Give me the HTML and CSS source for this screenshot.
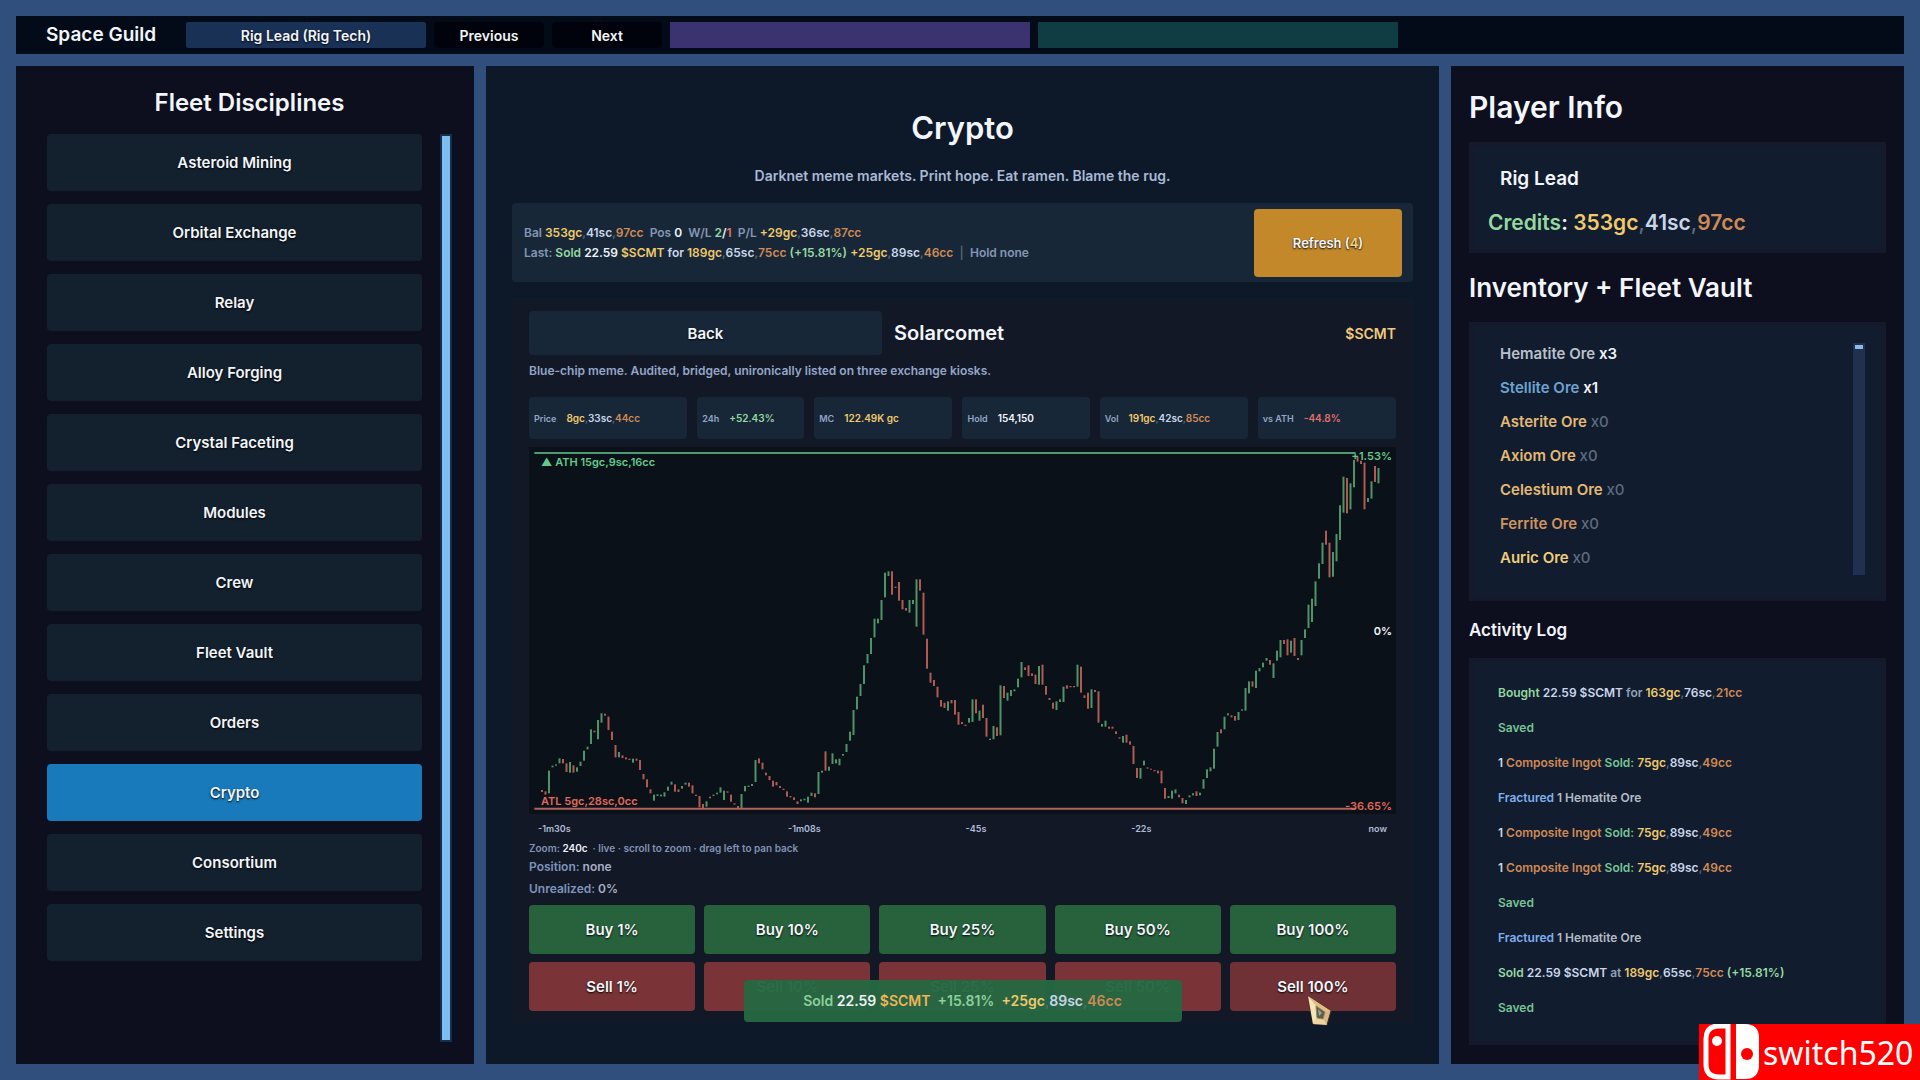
FILE: index.html
```html
<!DOCTYPE html>
<html lang="en">
<head>
    <meta charset="UTF-8">
    <meta name="viewport" content="width=device-width, initial-scale=1.0">
    <title>Space Guild | Crypto</title>
    <link rel="stylesheet" href="styles.css">
</head>
<body>
    <header class="topbar">
        <div class="brand">Space Guild</div>
        <button class="rank" type="button">Rig Lead (Rig Tech)</button>
        <button class="step" type="button">Previous</button>
        <button class="step" type="button">Next</button>
        <div class="meter purple"></div>
        <div class="meter teal"></div>
    </header>

    <main class="columns">
        <nav class="panel disciplines">
            <h2>Fleet Disciplines</h2>
            <div class="nav-scroll">
                <div class="nav-list">
                    <button type="button">Asteroid Mining</button>
                    <button type="button">Orbital Exchange</button>
                    <button type="button">Relay</button>
                    <button type="button">Alloy Forging</button>
                    <button type="button">Crystal Faceting</button>
                    <button type="button">Modules</button>
                    <button type="button">Crew</button>
                    <button type="button">Fleet Vault</button>
                    <button type="button">Orders</button>
                    <button type="button" class="active">Crypto</button>
                    <button type="button">Consortium</button>
                    <button type="button">Settings</button>
                </div>
                <div class="nav-bar"></div>
            </div>
        </nav>

        <section class="panel market">
            <h1>Crypto</h1>
            <p class="tagline">Darknet meme markets. Print hope. Eat ramen. Blame the rug.</p>

            <div class="account">
                <div class="account-text">
                    <p>Bal <span class="gc">353gc</span><i>,</i><span class="sc">41sc</span><i>,</i><span class="cc">97cc</span>&nbsp; Pos <b>0</b>&nbsp; W/L <span class="up">2</span><b>/</b><span class="down">1</span>&nbsp; P/L <span class="gc">+29gc</span><i>,</i><span class="sc">36sc</span><i>,</i><span class="cc">87cc</span></p>
                    <p>Last: <span class="up">Sold</span> <b>22.59</b> <span class="gc">$SCMT</span> <span class="sc">for</span> <span class="gc">189gc</span><i>,</i><span class="sc">65sc</span><i>,</i><span class="cc">75cc</span> <span class="up">(+15.81%)</span> <span class="gc">+25gc</span><i>,</i><span class="sc">89sc</span><i>,</i><span class="cc">46cc</span> <i>&nbsp;|&nbsp;</i> Hold none</p>
                </div>
                <button class="refresh" type="button">Refresh (<span class="count">4</span>)</button>
            </div>

            <div class="coin">
                <div class="coin-head">
                    <button class="back" type="button">Back</button>
                    <h3>Solarcomet</h3>
                    <span class="ticker">$SCMT</span>
                </div>
                <p class="about">Blue-chip meme. Audited, bridged, unironically listed on three exchange kiosks.</p>

                <div class="stats">
                    <div>Price <strong><span class="gc">8gc</span><i>,</i><span class="sc">33sc</span><i>,</i><span class="cc">44cc</span></strong></div>
                    <div>24h <strong class="up">+52.43%</strong></div>
                    <div>MC <strong class="gc">122.49K gc</strong></div>
                    <div>Hold <strong class="white">154,150</strong></div>
                    <div>Vol <strong><span class="gc">191gc</span><i>,</i><span class="sc">42sc</span><i>,</i><span class="cc">85cc</span></strong></div>
                    <div>vs ATH <strong class="down">-44.8%</strong></div>
                </div>

                <div class="chart">
                    <svg id="candles" viewBox="0 0 2601 1101" preserveAspectRatio="none"></svg>
                    <span class="tag ath">▲ ATH 15gc,9sc,16cc</span>
                    <span class="tag high">+1.53%</span>
                    <span class="tag zero">0%</span>
                    <span class="tag atl">ATL 5gc,28sc,0cc</span>
                    <span class="tag low">-36.65%</span>
                </div>
                <div class="axis">
                    <span>-1m30s</span><span>-1m08s</span><span>-45s</span><span>-22s</span><span>now</span>
                </div>

                <p class="zoom">Zoom: <b>240c</b> &nbsp;· live · scroll to zoom · drag left to pan back</p>
                <p class="holding">Position: <span>none</span></p>
                <p class="holding">Unrealized: <span>0%</span></p>

                <div class="trade">
                    <button class="buy" type="button">Buy 1%</button>
                    <button class="buy" type="button">Buy 10%</button>
                    <button class="buy" type="button">Buy 25%</button>
                    <button class="buy" type="button">Buy 50%</button>
                    <button class="buy" type="button">Buy 100%</button>
                    <button class="sell" type="button">Sell 1%</button>
                    <button class="sell" type="button">Sell 10%</button>
                    <button class="sell" type="button">Sell 25%</button>
                    <button class="sell" type="button">Sell 50%</button>
                    <button class="sell" type="button">Sell 100%
                        <svg class="pointer" viewBox="0 0 26 32">
                            <path d="M1 1 L24 16 L20 30 L6 29 Z" fill="#d8b985" stroke="#3a2a1c" stroke-width="1"/>
                            <path d="M1 1 L24 16 L18 17 L9 11 Z" fill="#e0bd84"/>
                            <path d="M1 1 L9 11 L10 23 L6 29 Z" fill="#f6e4b4"/>
                            <path d="M6 29 L10 23 L16 24 L20 30 Z" fill="#ecd5a0"/>
                            <path d="M9 11 L18 17 L16 24 L10 23 Z" fill="#5a5c50" stroke="#9a8558" stroke-width="1"/>
                            <path d="M11 14 L15 18 L12 21 Z" fill="#9aa59c"/>
                        </svg>
                    </button>
                </div>
                <div class="toast">Sold <b>22.59</b> <span class="ora">$SCMT</span>&nbsp; +15.81%&nbsp; <span class="gc">+25gc</span><i>,</i><span class="sc">89sc</span><i>,</i><span class="cc">46cc</span></div>
            </div>
        </section>

        <aside class="panel info">
            <h2>Player Info</h2>
            <div class="card player">
                <p class="name">Rig Lead</p>
                <p class="credits"><span class="up">Credits</span><b>:</b> <span class="gc">353gc</span><i>,</i><span class="sc">41sc</span><i>,</i><span class="cc">97cc</span></p>
            </div>

            <h3>Inventory + Fleet Vault</h3>
            <div class="card inventory">
                <ul>
                    <li class="hematite">Hematite Ore <b>x3</b></li>
                    <li class="stellite">Stellite Ore <b>x1</b></li>
                    <li class="asterite">Asterite Ore <i>x0</i></li>
                    <li class="asterite">Axiom Ore <i>x0</i></li>
                    <li class="asterite">Celestium Ore <i>x0</i></li>
                    <li class="ferrite">Ferrite Ore <i>x0</i></li>
                    <li class="auric">Auric Ore <i>x0</i></li>
                </ul>
                <div class="inv-bar"><div class="thumb"></div></div>
            </div>

            <h4>Activity Log</h4>
            <div class="card log">
                <p><span class="up">Bought</span> <span class="sc">22.59 $SCMT</span> for <span class="gc">163gc</span><i>,</i><span class="sc">76sc</span><i>,</i><span class="cc">21cc</span></p>
                <p><span class="saved">Saved</span></p>
                <p><span class="sc">1</span> <span class="cc">Composite Ingot</span> <span class="saved">Sold:</span> <span class="gc">75gc</span><i>,</i><span class="sc">89sc</span><i>,</i><span class="cc">49cc</span></p>
                <p><span class="blue">Fractured</span> <span class="grey">1 Hematite Ore</span></p>
                <p><span class="sc">1</span> <span class="cc">Composite Ingot</span> <span class="saved">Sold:</span> <span class="gc">75gc</span><i>,</i><span class="sc">89sc</span><i>,</i><span class="cc">49cc</span></p>
                <p><span class="sc">1</span> <span class="cc">Composite Ingot</span> <span class="saved">Sold:</span> <span class="gc">75gc</span><i>,</i><span class="sc">89sc</span><i>,</i><span class="cc">49cc</span></p>
                <p><span class="saved">Saved</span></p>
                <p><span class="blue">Fractured</span> <span class="grey">1 Hematite Ore</span></p>
                <p><span class="up">Sold</span> <span class="sc">22.59 $SCMT</span> at <span class="gc">189gc</span><i>,</i><span class="sc">65sc</span><i>,</i><span class="cc">75cc</span> <span class="up">(+15.81%)</span></p>
                <p><span class="saved">Saved</span></p>
            </div>
        </aside>
    </main>

    <div class="watermark">
        <svg viewBox="0 0 56 56">
            <path d="M16 2 H25 V53 H16 Q3 53 3 40 V15 Q3 2 16 2 Z" fill="none" stroke="#fff" stroke-width="5"/>
            <circle cx="14" cy="17" r="5" fill="#fff"/>
            <path d="M33 0 H42 Q56 0 56 14 V41 Q56 55 42 55 H33 Z" fill="#fff"/>
            <circle cx="44" cy="30" r="6" fill="#f00"/>
        </svg>
        <span>switch520</span>
    </div>
    <script src="script.js"></script>
</body>
</html>
```
FILE: styles.css
```css
* {
    box-sizing: border-box;
}
body {
    margin: 0;
    min-height: 100vh;
    padding: 16px;
    display: flex;
    flex-direction: column;
    gap: 12px;
    background-color: #304f7d;
    color: #f2f5fa;
    font-family: Inter, "Liberation Sans", sans-serif;
    font-weight: 600;
}
h1, h2, h3, h4, p, ul {
    margin: 0;
    padding: 0;
    font-weight: 600;
}
button {
    font: inherit;
    color: #f2f5fa;
    border: none;
    border-radius: 4px;
    padding: 0;
    cursor: pointer;
    text-shadow: 0 1px 2px #000;
}
b {
    font-weight: 600;
    color: #eef2f8;
}
i {
    font-style: normal;
    font-weight: 500;
    color: #5d6b7e;
}

/* coin + status colours */
.gc { color: #f0c96c; }
.sc { color: #c9d6ea; }
.cc { color: #cf8a55; }
.up { color: #95d8a0; }
.down { color: #e0706c; }
.ora { color: #f0b458; }
.white { color: #f2f5fa; }
.saved { color: #76c493; }
.blue { color: #7fb0ee; }
.grey { color: #b4bcc6; }

/* top bar */
.topbar {
    height: 38px;
    padding: 6px 30px;
    display: flex;
    background-color: #020b17;
    font-size: 14px;
}
.brand {
    width: 140px;
    font-size: 19px;
    line-height: 26px;
}
.rank {
    width: 240px;
    margin-right: 8px;
    border-radius: 2px;
    background-color: #1a3156;
}
.step {
    width: 110px;
    margin-right: 8px;
    background-color: #01030c;
}
.meter {
    width: 360px;
    margin-right: 8px;
}
.purple {
    background-color: #3b3370;
}
.teal {
    background-color: #103c43;
}

/* three columns */
.columns {
    flex: 1;
    display: grid;
    grid-template-columns: 458fr 953fr 453fr;
    gap: 12px;
}
.panel {
    background-color: #0d0e1e;
    min-width: 0;
}

/* left nav */
.disciplines {
    display: flex;
    flex-direction: column;
    padding: 21px 22px 22px 31px;
}
.disciplines h2 {
    font-size: 24px;
    line-height: 32px;
    text-align: center;
}
.nav-scroll {
    flex: 1;
    display: flex;
    justify-content: space-between;
    gap: 18px;
    margin-top: 15px;
}
.nav-list {
    flex: 1;
    display: flex;
    flex-direction: column;
    gap: 13px;
}
.nav-list button {
    height: 57px;
    background-color: #13202e;
    font-size: 15px;
}
.nav-list .active {
    background-color: #187abb;
}
.nav-bar {
    width: 12px;
    background-color: #7fbdf0;
    border: 2px solid #14304d;
}

/* market */
.market {
    background-color: #0d1828;
    padding: 40px 26px;
}
.market h1 {
    font-size: 31px;
    line-height: 44px;
    text-align: center;
}
.tagline {
    margin-top: 16px;
    font-size: 14px;
    line-height: 20px;
    text-align: center;
    color: #a9b9d6;
}
.account {
    display: flex;
    justify-content: space-between;
    align-items: center;
    margin-top: 17px;
    height: 79px;
    padding: 0 11px 0 12px;
    background-color: #182738;
    border-radius: 4px;
    font-size: 12px;
    line-height: 20px;
    color: #8397b5;
}
.refresh {
    width: 148px;
    height: 68px;
    background-color: #c3882a;
    font-size: 13px;
}
.count {
    color: #f0d28a;
}
.coin {
    position: relative;
    margin-top: 17px;
    padding: 11px 16px 11px 16px;
    background-color: #131827;
    border: 1px solid #101a2b;
}
.coin-head {
    display: flex;
    align-items: center;
    gap: 12px;
}
.back {
    width: 353px;
    height: 44px;
    background-color: #182738;
    font-size: 15px;
}
.coin-head h3 {
    flex: 1;
    font-size: 20px;
}
.ticker {
    color: #f0c97c;
    font-size: 14px;
}
.about {
    margin-top: 6px;
    font-size: 12px;
    line-height: 20px;
    color: #93a6c8;
}
.stats {
    display: grid;
    grid-template-columns: 158fr 107fr 138fr 127fr 148fr 138fr;
    gap: 10px;
    margin-top: 16px;
    font-size: 9px;
    color: #93a6c8;
}
.stats div {
    display: flex;
    align-items: center;
    gap: 10px;
    height: 42px;
    padding-left: 5px;
    background-color: #182738;
    border-radius: 4px;
}
.stats strong {
    font-weight: 600;
    font-size: 10px;
}

/* chart */
.chart {
    position: relative;
    margin-top: 8px;
    height: 367px;
    background-color: #0a1118;
}
.chart svg {
    display: block;
    width: 100%;
    height: 100%;
}
.tag {
    position: absolute;
    font-size: 11px;
    line-height: 14px;
}
.ath {
    left: 12px;
    top: 8px;
    color: #63c88b;
}
.high {
    right: 4px;
    top: 2px;
    color: #63c88b;
}
.zero {
    right: 4px;
    top: 177px;
}
.atl {
    left: 12px;
    bottom: 6px;
    color: #e0695c;
}
.low {
    right: 4px;
    bottom: 1px;
    color: #e0695c;
}
.axis {
    display: flex;
    padding: 0 9px;
    margin-top: 8px;
    font-size: 9px;
    line-height: 14px;
    color: #b0bcd8;
}
.axis span {
    flex: 1 1 auto;
    text-align: center;
}
.axis span:first-child {
    text-align: left;
}
.axis span:last-child {
    text-align: right;
}
.zoom {
    margin-top: 5px;
    font-size: 10px;
    line-height: 14px;
    color: #7f93b5;
}
.holding {
    margin-top: 2px;
    font-size: 12px;
    line-height: 20px;
    color: #7d94ba;
}
.holding span {
    color: #a5afc2;
}
.trade {
    display: grid;
    grid-template-columns: repeat(5, 1fr);
    gap: 8px 9px;
    margin-top: 6px;
    font-size: 15px;
}
.trade button {
    position: relative;
    height: 49px;
}
.buy {
    background-color: #27623d;
}
.sell {
    background-color: #7a3336;
}
.trade button:last-child {
    background-color: #703136;
}
.pointer {
    position: absolute;
    left: 77px;
    top: 33px;
    width: 26px;
    height: 32px;
    z-index: 2;
}
.toast {
    position: absolute;
    left: 50%;
    bottom: 0;
    width: 438px;
    margin-left: -219px;
    border-radius: 4px;
    background-color: rgba(38, 103, 66, 0.97);
    font-size: 14px;
    line-height: 42px;
    text-align: center;
    color: #8bd09b;
}

/* right column */
.info {
    display: flex;
    flex-direction: column;
    padding: 21px 18px 19px 18px;
}
.info h2 {
    font-size: 30px;
    line-height: 40px;
}
.info h3 {
    margin-top: 17px;
    font-size: 26px;
    line-height: 36px;
}
.info h4 {
    margin-top: 18px;
    font-size: 17px;
    line-height: 22px;
}
.card {
    background-color: #111c2e;
    border: 5px solid #14192b;
}
.player {
    margin-top: 15px;
    height: 111px;
    padding: 18px 14px;
}
.name {
    padding-left: 12px;
    font-size: 19px;
    line-height: 28px;
}
.credits {
    margin-top: 14px;
    font-size: 21px;
    line-height: 32px;
}
.inventory {
    display: flex;
    justify-content: space-between;
    margin-top: 16px;
    height: 279px;
    padding: 10px 16px 20px 26px;
}
.inventory ul {
    list-style: none;
    font-size: 15px;
    line-height: 34px;
}
.hematite { color: #b9c1cc; }
.stellite { color: #6fa3d2; }
.asterite { color: #e3b974; }
.ferrite { color: #cf935f; }
.auric { color: #f0cc7a; }
.inv-bar {
    width: 12px;
    height: 232px;
    margin-top: 6px;
    padding: 2px;
    background-color: #21304f;
}
.thumb {
    height: 4px;
    background-color: #86bdea;
}
.log {
    flex: 1;
    margin-top: 17px;
    padding: 12px 24px;
    font-size: 12px;
    line-height: 35px;
    color: #8fa1b8;
}

.watermark {
    position: fixed;
    right: 0;
    bottom: 0;
    display: flex;
    align-items: center;
    gap: 4px;
    width: 221px;
    height: 56px;
    padding-left: 4px;
    background-color: #ff0000;
    color: #fff;
    font-family: "Noto Sans", sans-serif;
    font-weight: 400;
    font-size: 32px;
}
.watermark svg {
    width: 56px;
    height: 56px;
}
```
FILE: script.js
```js
// one entry per candle: u = up, d = down, then high-low
const data = `
d1080-1086 d1084-1094 u1022-1090 u1007-1012 u1003-1007 u985-1000 d987-1000 d1000-1026 u996-1028 d1006-1028
u1012-1025 u995-1008 u962-992 u950-958 u898-942 d902-907 u870-928 u850-878 d851-857 d860-900
d905-930 d945-982 u966-982 d976-984 d982-988 d986-990 u986-998 d986-992 d990-1020 d1032-1048
d1048-1072 d1078-1090 u1094-1112 u1093-1098 u1094-1099 u1087-1100 u1070-1082 u1055-1064 d1063-1085 d1078-1086
u1068-1076 u1058-1064 d1058-1070 d1066-1090 d1094-1098 d1098-1132 d1122-1134 u1114-1130 d1100-1105 u1094-1098
u1088-1093 u1072-1088 u1082-1110 d1084-1088 d1094-1115 d1120-1124 d1128-1134 u1092-1134 u1068-1084 u1067-1071
u1062-1068 u990-1056 d985-1000 d998-1018 d1028-1036 d1038-1050 d1052-1070 d1056-1066 d1068-1074 d1076-1080
d1084-1100 d1098-1102 d1102-1110 d1114-1122 u1108-1114 u1106-1111 u1100-1118 u1088-1098 d1090-1102 u1026-1092
u1022-1028 d964-1022 u1010-1022 u970-1002 u988-1000 u986-1006 u972-977 u942-966 u905-932 u840-915
u800-838 u762-798 u706-762 u672-700 u624-672 u566-622 u566-580 u510-570 u428-502 u424-438
d424-494 d470-474 d456-512 d510-538 d534-542 u510-548 u510-522 u448-590 d448-482 d488-614
d626-716 d728-758 d750-768 d770-802 d810-830 d818-834 u814-842 d810-820 d810-854 d846-884
d876-882 d884-888 u864-878 u808-876 d808-850 u842-872 d824-864 d864-920 u926-930 u888-928
d892-918 u766-916 d768-804 u788-812 u780-798 u778-784 u746-772 u696-742 d712-720 d706-738
d730-738 d734-762 u708-764 d704-764 d768-794 d804-810 d818-836 u814-840 u808-816 u770-816
d766-776 d768-772 d768-772 u704-770 d710-788 d796-804 d788-836 u778-834 d780-786 d784-878
u882-890 u872-890 d890-896 d890-896 d904-912 d922-926 u918-938 d914-938 d934-944 d948-1002
d1014-1044 u1014-1046 u992-1006 d1012-1016 d1016-1019 d1020-1024 d1022-1030 d1022-1060 d1074-1106 u1098-1104
u1082-1106 u1078-1090 d1094-1102 d1104-1120 u1110-1122 u1096-1102 u1090-1096 d1084-1098 u1088-1096 u1048-1076
u1018-1044 u1012-1024 u956-1016 u906-950 d898-910 u860-898 u850-856 d856-862 d858-872 u846-870
u838-842 u774-842 u754-790 d754-770 u722-774 u714-724 u698-712 u684-692 d690-704 u700-744
u662-692 u630-682 d630-642 d628-676 u632-668 d624-678 d684-690 u630-676 u598-624 u524-594
u506-576 u454-528 u400-446 u338-402 d302-344 d338-442 u366-440 u312-394 u226-330 u140-248
d144-250 u160-238 u90-172 d80-95 d92-102 d98-238 u204-216 u154-206 d108-156 u114-160
`;

const svg = document.getElementById('candles');
let out = '<line x1="16" x2="2480" y1="18" y2="18" stroke="#4f9a70" stroke-width="6"/>' +
          '<line x1="16" x2="2480" y1="1085" y2="1085" stroke="#b0645c" stroke-width="6"/>';

data.trim().split(/\s+/).forEach((c, i) => {
    const [high, low] = c.slice(1).split('-').map(Number);
    const color = c[0] === 'u' ? '#4f9466' : '#b05a52';
    out += `<rect x="${36 + i * 10.5}" y="${high - 51}" width="6" height="${low - high}" fill="${color}"/>`;
});
svg.innerHTML = out;
```
